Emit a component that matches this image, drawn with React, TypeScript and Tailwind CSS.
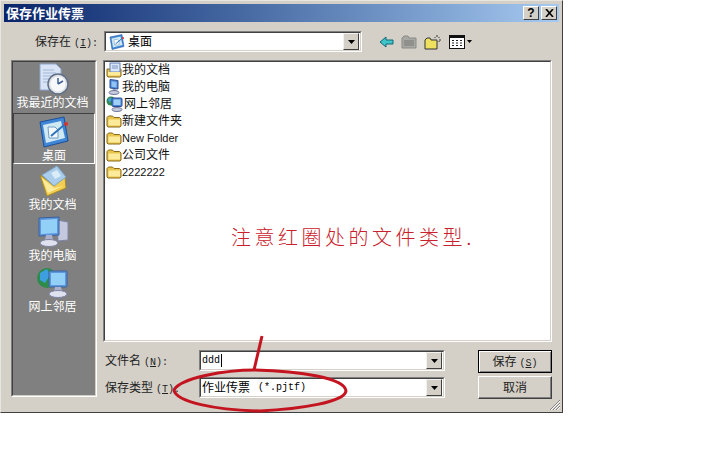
const font = { fontFamily: '"Liberation Sans","Noto Sans CJK SC",sans-serif' };
const mono = { fontFamily: '"Liberation Mono",monospace' };

function FolderIcon() {
  return (
    <svg width="16" height="16" viewBox="0 0 16 16" className="shrink-0">
      <path d="M1 4.5 L2.5 3 H6.5 L8 4.5 H13.5 L15 6 V13 L14 14 H2 L1 13 Z" fill="#e8c44a" stroke="#8a6a1c" strokeWidth="1" />
      <path d="M2.5 6.5 H14 V12.5 H2.5 Z" fill="#fdeb9c" />
    </svg>
  );
}

function DocsSmall() {
  return (
    <svg width="16" height="16" viewBox="0 0 16 16" className="shrink-0">
      <path d="M1 7 H15 V14 L14 15 H2 L1 14 Z" fill="#e8c44a" stroke="#8a6a1c" />
      <rect x="4" y="1" width="10" height="9" fill="#d9e6f7" stroke="#5f7fb5" />
      <path d="M6 4 H12 M6 6 H12" stroke="#7a94c2" />
      <path d="M2 10 H14 V13.5 H2 Z" fill="#fdeb9c" />
    </svg>
  );
}

function ComputerSmall() {
  return (
    <svg width="16" height="16" viewBox="0 0 16 16" className="shrink-0">
      <path d="M4 0.5 L12 1.5 V10 L4 9 Z" fill="#4d86d8" stroke="#2f4f8f" />
      <path d="M5.5 2.3 L10.5 3 V8.5 L5.5 7.7 Z" fill="#8fc4f4" />
      <path d="M7 10 H10 L11 12 H6 Z" fill="#9aa4c4" />
      <ellipse cx="8" cy="13.5" rx="5" ry="2" fill="#c9cde0" stroke="#6e7698" />
    </svg>
  );
}

function NetworkSmall() {
  return (
    <svg width="18" height="16" viewBox="0 0 18 16" className="shrink-0">
      <circle cx="5" cy="5" r="4.5" fill="#2f8a4c" />
      <path d="M2 3 L5 1.5 L6 4 L3.5 7 Z" fill="#3ea0dc" />
      <rect x="6" y="2" width="10" height="8.5" rx="1" fill="#4d86d8" stroke="#2f4f8f" />
      <rect x="7.5" y="3.5" width="7" height="5.5" fill="#9fd0f7" />
      <ellipse cx="11" cy="13.5" rx="5" ry="2" fill="#c9cde0" stroke="#6e7698" />
    </svg>
  );
}

function DesktopIcon({ size }: { size: number }) {
  return (
    <svg width={size} height={size} viewBox="0 0 32 32" className="shrink-0">
      <path d="M2 6 L26 1 L30 25 L6 31 Z" fill="#3f86d6" stroke="#1c4f96" />
      <path d="M5 9 L23 5 L27 22 L8 27 Z" fill="#cfe8f2" />
      <path d="M10 11 H17 L20 14 V22 H11 Z" fill="#f4f8fb" stroke="#6f9cc4" />
      <path d="M13 20 L26 9" stroke="#2f74bc" strokeWidth="2" />
      <circle cx="28" cy="8" r="2" fill="#d8332a" />
    </svg>
  );
}

function RecentIcon() {
  return (
    <svg width="32" height="32" viewBox="0 0 32 32" className="shrink-0">
      <path d="M3 1 H19 L24 6 V27 H3 Z" fill="#d8e4f6" stroke="#8ea6cd" />
      <path d="M6 7 H17 M6 10 H19 M6 13 H15 M6 16 H14 M6 19 H12" stroke="#a3b6d6" />
      <circle cx="21" cy="21" r="10" fill="#dfe3e8" stroke="#5f6f86" strokeWidth="1.5" />
      <circle cx="21" cy="21" r="7.5" fill="#f7f8fa" />
      <path d="M21 21 L21 15 M21 21 L26 18" stroke="#3d5f96" strokeWidth="1.5" />
    </svg>
  );
}

function DocsLarge() {
  return (
    <svg width="32" height="32" viewBox="0 0 32 32" className="shrink-0">
      <path d="M3 10 L10 31 L29 23 L28 12 L16 20 Z" fill="#f2cf52" stroke="#a88a2a" />
      <path d="M5 10 L20 1 L29 12 L17 21 Z" fill="#a9cdea" stroke="#7fa4c9" />
      <path d="M14 8 L20 5 L24 11 L18 14 Z" fill="#d9ecf8" />
      <path d="M5 13 L11 28 L26 21 L17 23 Z" fill="#fdeb9c" />
    </svg>
  );
}

function ComputerLarge() {
  return (
    <svg width="32" height="32" viewBox="0 0 32 32" className="shrink-0">
      <path d="M20 4 L31 6 V24 L21 25 Z" fill="#c4c8de" stroke="#7e84a4" />
      <path d="M2 2 L22 1 V19 L2 20 Z" fill="#5f97dc" stroke="#39609e" />
      <path d="M4 4 L20 3 V17 L4 18 Z" fill="#93d0f7" />
      <path d="M9 19 H15 L16 24 H8 Z" fill="#aab0cc" />
      <ellipse cx="12" cy="27" rx="9" ry="3.5" fill="#dfe1ee" stroke="#7e84a4" />
    </svg>
  );
}

function NetworkLarge() {
  return (
    <svg width="32" height="32" viewBox="0 0 32 32" className="shrink-0">
      <circle cx="10" cy="11" r="10" fill="#2e8b4a" />
      <path d="M3 6 L10 2 L13 8 L8 16 L3 13 Z" fill="#3d9fe0" />
      <rect x="12" y="4" width="18" height="16" rx="1" fill="#5f97dc" stroke="#39609e" />
      <rect x="14" y="6" width="14" height="12" fill="#93d0f7" />
      <path d="M18 20 H24 L25 25 H17 Z" fill="#aab0cc" />
      <ellipse cx="21" cy="27" rx="9" ry="3.5" fill="#dfe1ee" stroke="#7e84a4" />
    </svg>
  );
}

function Bevel({ children, className = "" }: { children: React.ReactNode; className?: string }) {
  return (
    <div className={`border border-t-[#808080] border-l-[#808080] border-b-white border-r-white ${className}`}>
      <div className="h-full w-full border border-t-[#404040] border-l-[#404040] border-b-[#d4d0c8] border-r-[#d4d0c8]">
        {children}
      </div>
    </div>
  );
}

function ArrowBtn() {
  return (
    <div className="flex h-[17px] w-[16px] shrink-0 items-center justify-center border border-t-[#f4f2ee] border-l-[#f4f2ee] border-b-[#404040] border-r-[#404040] bg-[#d4d0c8]">
      <svg width="7" height="4" viewBox="0 0 7 4"><path d="M0 0 H7 L3.5 4 Z" fill="#000" /></svg>
    </div>
  );
}

function Combo({ children, width }: { children: React.ReactNode; width: string }) {
  return (
    <Bevel className={`h-[21px] shrink-0 ${width}`}>
      <div className="flex h-full items-center justify-between bg-white pr-px">
        <div className="flex items-center text-[12px] text-black">{children}</div>
        <ArrowBtn />
      </div>
    </Bevel>
  );
}

function SideItem({ icon, label, active }: { icon: React.ReactNode; label: string; active?: boolean }) {
  return (
    <div className={`flex h-[51px] flex-col items-center justify-end ${active ? "border border-t-[#404040] border-l-[#404040] border-b-white border-r-white bg-[#858585]" : "pb-[3px] pr-[3px]"}`}>
      {icon}
      <span className="mt-px text-[12px] leading-[14px] text-white">{label}</span>
    </div>
  );
}

function FileRow({ icon, label, latin }: { icon: React.ReactNode; label: string; latin?: boolean }) {
  return (
    <div className="flex h-[17px] items-center">
      {icon}
      <span className={`leading-[16px] text-[#111] ${latin ? "text-[11px]" : "text-[12px]"}`}>{label}</span>
    </div>
  );
}

function Key({ before, letter }: { before: string; letter: string }) {
  return (
    <span className="whitespace-pre">
      {before}
      <span className="ml-[3px] text-[10px]" style={mono}>(<span className="underline">{letter}</span>)</span>
    </span>
  );
}

function Btn({ children, def }: { children: React.ReactNode; def?: boolean }) {
  return (
    <div className={`flex w-[74px] items-center justify-center bg-[#d4d0c8] text-[12px] text-[#222] ${def ? "h-[23px] border border-black shadow-[inset_1px_1px_0_#fff,inset_-1px_-1px_0_#808080]" : "h-[23px] border border-t-white border-l-white border-b-[#404040] border-r-[#404040] shadow-[inset_-1px_-1px_0_#808080]"}`}>
      {children}
    </div>
  );
}

export default function App() {
  return (
    <div className="relative h-[450px] w-[720px] overflow-hidden bg-white" style={font}>
      <div className="relative flex h-[413px] w-[563px] flex-col border border-t-[#e8e6e0] border-l-[#e8e6e0] border-b-[#404040] border-r-[#404040] bg-[#d4d0c8] px-[3px] pt-[3px]">
        {/* title bar */}
        <div className="flex h-[18px] shrink-0 items-center justify-between bg-gradient-to-r from-[#0a246a] to-[#a6caf0] pl-[2px] pr-[2px]">
          <span className="text-[13px] font-bold leading-none text-white">保存作业传票</span>
          <div className="flex gap-[2px]">
            <div className="flex h-[14px] w-[16px] items-center justify-center border border-t-white border-l-white border-b-[#404040] border-r-[#404040] bg-[#d4d0c8] text-[12px] font-bold leading-none text-black">?</div>
            <div className="flex h-[14px] w-[16px] items-center justify-center border border-t-white border-l-white border-b-[#404040] border-r-[#404040] bg-[#d4d0c8]">
              <svg width="9" height="8" viewBox="0 0 9 8"><path d="M1 0 L8 8 M8 0 L1 8" stroke="#000" strokeWidth="1.6" /></svg>
            </div>
          </div>
        </div>

        {/* save-in row */}
        <div className="mt-[9px] flex h-[21px] shrink-0 items-center pl-[31px]">
          <span className="w-[69px] text-[12px] text-[#222]">
            <Key before="保存在" letter="I" /><span className="text-[10px]" style={mono}>:</span>
          </span>
          <Combo width="w-[258px]">
            <span className="ml-[3px] mr-[3px]"><DesktopIcon size={16} /></span>
            <span>桌面</span>
          </Combo>
          <div className="ml-[17px] flex items-center gap-[7px]">
            <svg width="15" height="12" viewBox="0 0 15 12"><path d="M1 6 L7 1 V4 H14 V8 H7 V11 Z" fill="#3fc4c8" stroke="#0e6a78" /></svg>
            <svg width="16" height="14" viewBox="0 0 16 14"><path d="M1 3 L3 1 H7 L8 3 H15 V13 H1 Z" fill="#a8a8a4" stroke="#8a8a86" /><path d="M3 5 H13 V11 H3 Z" fill="#8f8f8b" /></svg>
            <svg width="18" height="16" viewBox="0 0 18 16"><path d="M1 6 L3 4 H6 L7 6 H13 V15 H1 Z" fill="#f0e060" stroke="#333" /><path d="M13 1 V3 M15.5 3 L14.5 4 M17 6 H15 M10.5 3 L11.5 4 M15.5 8 L14.5 7" stroke="#333" /></svg>
            <div className="flex items-center gap-[2px]">
              <svg width="16" height="14" viewBox="0 0 16 14"><rect x="0.5" y="0.5" width="15" height="13" fill="#fff" stroke="#111" /><rect x="0" y="0" width="16" height="3" fill="#111" /><path d="M3 5.5 H5 M7 5.5 H9 M11 5.5 H13 M3 8 H5 M7 8 H9 M11 8 H13 M3 10.5 H5 M7 10.5 H9 M11 10.5 H13" stroke="#222" /></svg>
              <svg width="5" height="3" viewBox="0 0 5 3"><path d="M0 0 H5 L2.5 3 Z" fill="#000" /></svg>
            </div>
          </div>
        </div>

        {/* main */}
        <div className="mt-[8px] flex min-h-0 flex-1 pl-[7px] pb-[14px] pr-[7px]">
          <Bevel className="h-[337px] w-[86px] shrink-0">
            <div className="h-full bg-[#808080]">
              <SideItem icon={<RecentIcon />} label="我最近的文档" />
              <SideItem icon={<DesktopIcon size={32} />} label="桌面" active />
              <SideItem icon={<DocsLarge />} label="我的文档" />
              <SideItem icon={<ComputerLarge />} label="我的电脑" />
              <SideItem icon={<NetworkLarge />} label="网上邻居" />
            </div>
          </Bevel>

          <div className="ml-[6px] flex min-w-0 flex-1 flex-col">
            <Bevel className="h-[282px] shrink-0">
              <div className="relative h-full bg-white pl-px">
                <div className="relative -top-px">
                  <FileRow icon={<DocsSmall />} label="我的文档" />
                  <FileRow icon={<ComputerSmall />} label="我的电脑" />
                  <FileRow icon={<NetworkSmall />} label="网上邻居" />
                  <FileRow icon={<FolderIcon />} label="新建文件夹" />
                  <FileRow icon={<FolderIcon />} label="New Folder" latin />
                  <FileRow icon={<FolderIcon />} label="公司文件" />
                  <FileRow icon={<FolderIcon />} label="2222222" latin />
                </div>
                <div className="absolute left-[126px] top-[163px] whitespace-nowrap text-[20px] font-light leading-[26px] tracking-[3.5px] text-[#c8202c]">
                  注意红圈处的文件类型.
                </div>
              </div>
            </Bevel>

            <div className="mt-[8px] flex">
              <div className="flex min-w-0 flex-1 flex-col gap-[6px]">
                <div className="flex h-[21px] items-center">
                  <span className="ml-[2px] w-[94px] text-[12px] text-[#222]">
                    <Key before="文件名" letter="N" /><span className="text-[10px]" style={mono}>:</span>
                  </span>
                  <Combo width="w-[246px]">
                    <span className="pl-[1px] text-[10px]" style={mono}>ddd</span>
                    <span className="ml-[1px] h-[13px] w-px bg-black" />
                  </Combo>
                </div>
                <div className="flex h-[21px] items-center">
                  <span className="ml-[2px] w-[94px] text-[12px] text-[#222]">
                    <Key before="保存类型" letter="T" /><span className="text-[10px]" style={mono}>:</span>
                  </span>
                  <Combo width="w-[246px]">
                    <span className="pl-[1px] text-[12px]">作业传票</span>
                    <span className="ml-[8px] text-[10px]" style={mono}>(*.pjtf)</span>
                  </Combo>
                </div>
              </div>
              <div className="flex flex-col gap-[3px] pr-0">
                <Btn def><Key before="保存" letter="S" /></Btn>
                <Btn>取消</Btn>
              </div>
            </div>
          </div>
        </div>

        {/* size grip */}
        <svg width="12" height="12" viewBox="0 0 12 12" className="absolute bottom-[1px] right-[1px]">
          <path d="M11 1 L1 11 M11 4 L4 11 M11 7 L7 11" stroke="#808080" />
          <path d="M11 2 L2 11 M11 5 L5 11 M11 8 L8 11" stroke="#fff" />
        </svg>
      </div>

      {/* red annotation overlay */}
      <svg width="720" height="450" viewBox="0 0 720 450" className="pointer-events-none absolute left-0 top-0">
        <path d="M262 336 L254 370" stroke="#c41420" strokeWidth="3" fill="none" />
        <path d="M174 390 C180 378 225 370 255 370 C300 371 345 378 346 391 C345 402 300 409 260 411 C215 410 176 402 174 390 Z" stroke="#c41420" strokeWidth="3" fill="none" />
      </svg>
    </div>
  );
}
